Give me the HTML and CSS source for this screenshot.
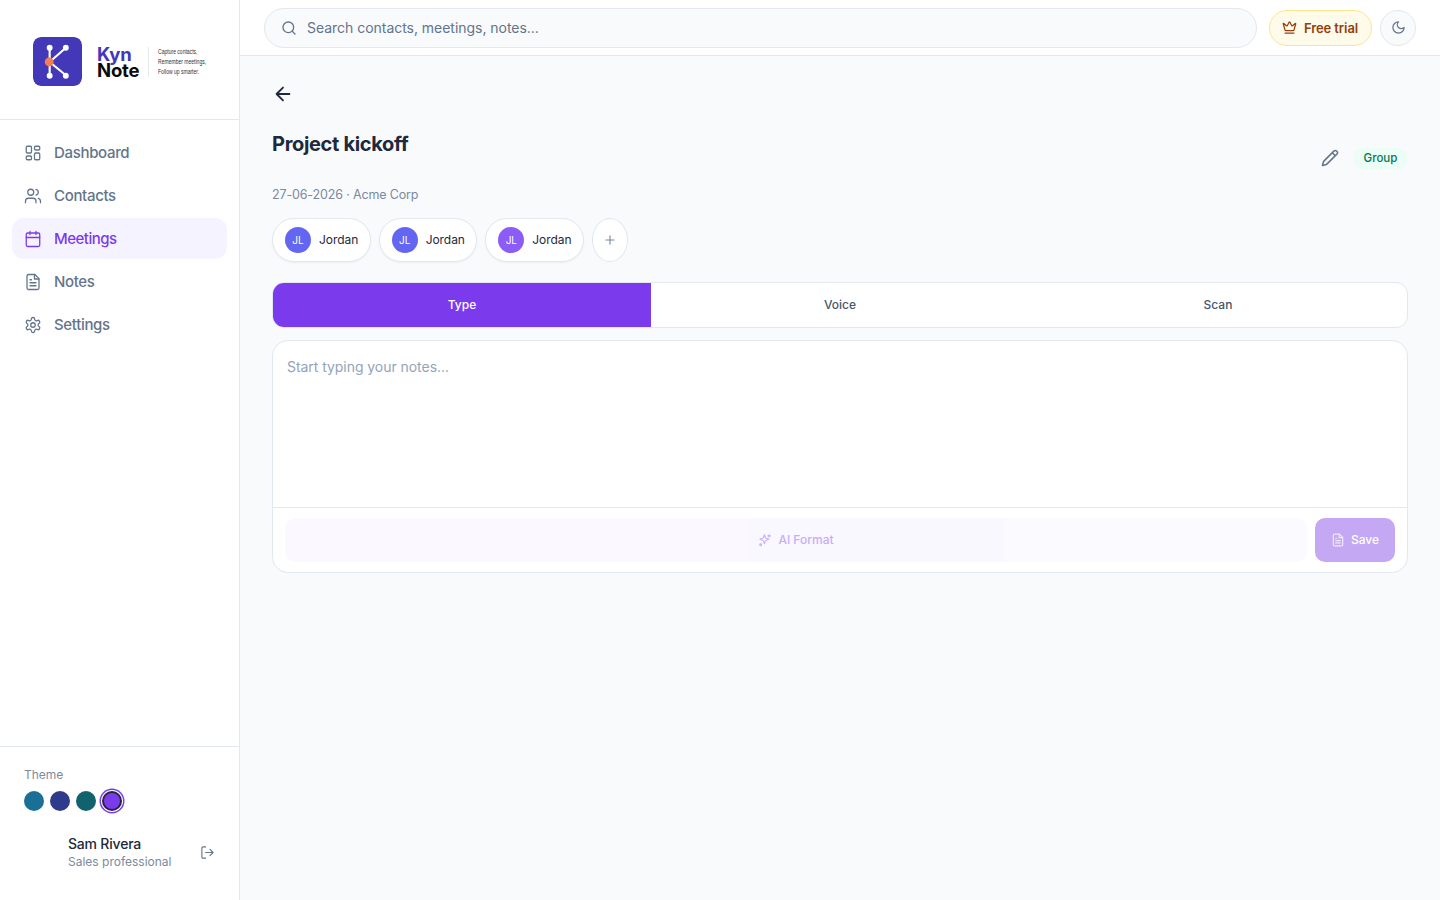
FILE: index.html
```html
<!DOCTYPE html>
<html lang="en">
<head>
<meta charset="utf-8">
<title>KynNote</title>
<link rel="stylesheet" href="styles.css">
</head>
<body>
<div class="app">
  <aside class="sidebar">
    <div class="brand">
      <svg class="logo" viewBox="0 0 50 50" width="49" height="49">
        <rect width="50" height="50" rx="8" fill="#4338b8"/>
        <g stroke="#fff" stroke-width="2.2" stroke-linecap="round">
          <path d="M17 11V40M17 25.500L33.500 11M17 25.500L33.500 39"/>
        </g>
        <circle cx="17" cy="11" r="3" fill="#fff"/><circle cx="33.500" cy="11" r="3" fill="#fff"/>
        <circle cx="17" cy="39.500" r="3" fill="#fff"/><circle cx="33.500" cy="39.500" r="3" fill="#fff"/>
        <circle cx="16.500" cy="25.500" r="4.500" fill="#f47c56"/>
      </svg>
      <div class="wordmark"><span class="kyn">Kyn</span><span class="note">Note</span></div>
      <div class="tagline"><span>Capture contacts,</span><span>Remember meetings,</span><span>Follow up smarter.</span></div>
    </div>
    <nav class="nav">
      <a class="nav-item"><svg class="ico" viewBox="0 0 24 24"><rect x="3" y="3" width="7" height="9" rx="1.500"/><rect x="14" y="3" width="7" height="5" rx="1.500"/><rect x="14" y="12" width="7" height="9" rx="1.500"/><rect x="3" y="16" width="7" height="5" rx="1.500"/></svg>Dashboard</a>
      <a class="nav-item"><svg class="ico" viewBox="0 0 24 24"><path d="M16 21v-2a4 4 0 0 0-4-4H6a4 4 0 0 0-4 4v2"/><circle cx="9" cy="7" r="4"/><path d="M22 21v-2a4 4 0 0 0-3-3.870M16 3.130a4 4 0 0 1 0 7.750"/></svg>Contacts</a>
      <a class="nav-item active"><svg class="ico" viewBox="0 0 24 24"><path d="M8 2v4M16 2v4"/><rect x="3" y="4" width="18" height="18" rx="2"/><path d="M3 10h18"/></svg>Meetings</a>
      <a class="nav-item"><svg class="ico" viewBox="0 0 24 24"><path d="M14.500 2H6a2 2 0 0 0-2 2v16a2 2 0 0 0 2 2h12a2 2 0 0 0 2-2V7.500z"/><path d="M14 2v6h6M16 13H8M16 17H8M10 9H8"/></svg>Notes</a>
      <a class="nav-item"><svg class="ico" viewBox="0 0 24 24"><path d="M12.220 2h-.440a2 2 0 0 0-2 2v.180a2 2 0 0 1-1 1.730l-.430.250a2 2 0 0 1-2 0l-.150-.080a2 2 0 0 0-2.730.730l-.220.380a2 2 0 0 0 .730 2.730l.150.100a2 2 0 0 1 1 1.720v.510a2 2 0 0 1-1 1.740l-.150.090a2 2 0 0 0-.730 2.730l.220.380a2 2 0 0 0 2.730.730l.150-.080a2 2 0 0 1 2 0l.430.250a2 2 0 0 1 1 1.730V20a2 2 0 0 0 2 2h.440a2 2 0 0 0 2-2v-.180a2 2 0 0 1 1-1.730l.430-.250a2 2 0 0 1 2 0l.150.080a2 2 0 0 0 2.730-.730l.220-.390a2 2 0 0 0-.730-2.730l-.150-.080a2 2 0 0 1-1-1.740v-.500a2 2 0 0 1 1-1.740l.150-.090a2 2 0 0 0 .730-2.730l-.220-.380a2 2 0 0 0-2.730-.730l-.150.080a2 2 0 0 1-2 0l-.430-.250a2 2 0 0 1-1-1.730V4a2 2 0 0 0-2-2z"/><circle cx="12" cy="12" r="3"/></svg>Settings</a>
    </nav>
    <div class="side-foot">
      <div class="theme-label">Theme</div>
      <div class="swatches">
        <span class="swatch s1"></span><span class="swatch s2"></span><span class="swatch s3"></span><span class="swatch s4"></span>
      </div>
      <div class="user">
        <div class="user-text"><div class="user-name">Sam Rivera</div><div class="user-role">Sales professional</div></div>
        <svg class="logout" viewBox="0 0 24 24"><path d="M9 21H5a2 2 0 0 1-2-2V5a2 2 0 0 1 2-2h4M16 17l5-5-5-5M21 12H9"/></svg>
      </div>
    </div>
  </aside>
  <div class="content">
    <header class="topbar">
      <div class="search">
        <svg class="search-ico" viewBox="0 0 24 24"><circle cx="11" cy="11" r="8"/><path d="m21 21-4.300-4.300"/></svg>
        <span>Search contacts, meetings, notes...</span>
      </div>
      <div class="trial">
        <svg class="crown" viewBox="0 0 24 24"><path d="M11.560 3.270a.5.500 0 0 1 .880 0l2.950 5.600a1 1 0 0 0 1.520.300l4.280-3.670a.5.500 0 0 1 .810.510l-2.830 10.240a1 1 0 0 1-.960.750H5.800a1 1 0 0 1-.960-.750L2 5.980a.5.500 0 0 1 .810-.510l4.280 3.670a1 1 0 0 0 1.520-.300z"/><path d="M5 21h14"/></svg>
        Free trial
      </div>
      <div class="theme-btn"><svg viewBox="0 0 24 24"><path d="M12 3a6 6 0 0 0 9 9 9 9 0 1 1-9-9z"/></svg></div>
    </header>
    <main class="main">
      <svg class="back" viewBox="0 0 24 24"><path d="m12 19-7-7 7-7M19 12H5"/></svg>
      <div class="title-row">
        <h1>Project kickoff</h1>
        <div class="title-side">
          <svg class="pencil" viewBox="0 0 24 24"><path d="M21.170 6.810a2.830 2.830 0 0 0-4-4L3.820 16.170a2 2 0 0 0-.500.830l-1.320 4.350a.5.500 0 0 0 .620.620l4.350-1.320a2 2 0 0 0 .830-.500zM15 5l4 4"/></svg>
          <span class="tag">Group</span>
        </div>
      </div>
      <div class="meta">27-06-2026 · Acme Corp</div>
      <div class="people">
        <div class="chip"><span class="avatar indigo">JL</span>Jordan</div>
        <div class="chip"><span class="avatar indigo">JL</span>Jordan</div>
        <div class="chip"><span class="avatar violet">JL</span>Jordan</div>
        <div class="add"><svg viewBox="0 0 24 24"><path d="M5 12h14M12 5v14"/></svg></div>
      </div>
      <div class="tabs">
        <div class="tab on">Type</div>
        <div class="tab">Voice</div>
        <div class="tab">Scan</div>
      </div>
      <section class="editor">
        <div class="editor-body">Start typing your notes...</div>
        <div class="editor-foot">
          <div class="ai-btn">
            <svg viewBox="0 0 24 24"><path d="M11 4.500 12.700 9.300a3 3 0 0 0 2 2L19.500 13l-4.800 1.700a3 3 0 0 0-2 2L11 21.500 9.300 16.700a3 3 0 0 0-2-2L2.500 13l4.800-1.700a3 3 0 0 0 2-2z" transform="translate(1 -1) scale(.9)"/><path d="M19 3v4M21 5h-4"/><circle cx="4.500" cy="20" r="1.500"/></svg>
            AI Format
          </div>
          <div class="save">
            <svg viewBox="0 0 24 24"><path d="M14.500 2H6a2 2 0 0 0-2 2v16a2 2 0 0 0 2 2h12a2 2 0 0 0 2-2V7.500z"/><path d="M14 2v6h6M16 13H8M16 17H8M10 9H8"/></svg>
            Save
          </div>
        </div>
      </section>
    </main>
  </div>
</div>
</body>
</html>
```
FILE: styles.css
```css
* { box-sizing: border-box; }
html, body { margin: 0; height: 100%; }
body {
  font-family: "Inter", "Noto Sans", sans-serif;
  color: #1e293b;
  background: #f8fafc;
}
svg { fill: none; stroke: currentColor; stroke-width: 2; stroke-linecap: round; stroke-linejoin: round; flex: none; display: block; }

.app { display: flex; width: 1440px; height: 900px; overflow: hidden; }

/* Sidebar */
.sidebar {
  width: 240px; flex: none; background: #fff;
  border-right: 1px solid #e2e8f0;
  display: flex; flex-direction: column;
}
.brand {
  height: 120px; flex: none; border-bottom: 1px solid #e2e8f0;
  display: flex; align-items: center; padding: 5px 0 0 33px;
}
.logo { stroke: none; border-radius: 8px; margin-right: 14px; margin-bottom: 2px; }
.logo g { stroke: #fff; }
.logo circle { stroke: none; }
.wordmark { display: flex; flex-direction: column; font-weight: 700; font-size: 18.500px; line-height: 15.500px; letter-spacing: -.2px; width: 51px; margin: 1px 0 0 1px; }
.kyn { color: #4338b8; }
.note { color: #0a0a0a; }
.tagline {
  display: flex; flex-direction: column; border-left: 1px solid #d9dde3;
  padding-left: 14px; font-family: "Liberation Sans", sans-serif;
  font-size: 7.500px; line-height: 10px; color: #333; white-space: nowrap;
  transform: scaleX(.67); transform-origin: left center;
}
.nav { padding: 12px 12px 0; display: flex; flex-direction: column; gap: 2px; flex: 1; }
.nav-item {
  height: 41px; display: flex; align-items: center; gap: 12px; padding: 0 12px;
  border-radius: 12px; font-size: 15px; font-weight: 500; color: #64748b; letter-spacing: -.33px;
}
.nav-item.active { background: #f5f3ff; color: #7c3aed; letter-spacing: -.5px; }
.ico { width: 18px; height: 18px; stroke-width: 1.700; }
.side-foot { height: 154px; flex: none; border-top: 1px solid #e2e8f0; padding: 21px 24px 0; }
.theme-label { font-size: 12px; line-height: 14px; color: #7b8aa0; }
.swatches { display: flex; gap: 6px; margin-top: 9px; align-items: center; height: 20px; }
.swatch { width: 20px; height: 20px; border-radius: 50%; flex: none; }
.s1 { background: #1a6f96; }
.s2 { background: #2e3a8c; }
.s3 { background: #12626e; }
.s4 { background: #7c3aed; box-shadow: 0 0 0 2px #1e293b, 0 0 0 3px #fff, 0 0 0 4.500px #7c3aed; width: 16px; height: 16px; margin: 0 2px; }
.user { display: flex; align-items: center; margin-top: 24px; padding-left: 44px; }
.user-text { flex: 1; white-space: nowrap; }
.user-name { font-size: 14px; line-height: 18px; font-weight: 500; color: #1e293b; letter-spacing: -.2px; }
.user-role { font-size: 12px; line-height: 17px; color: #7b8aa0; }
.logout { width: 15px; height: 15px; color: #64748b; stroke-width: 1.800; }

/* Top bar */
.content { flex: 1; display: flex; flex-direction: column; min-width: 0; }
.topbar {
  height: 56px; flex: none; background: #fff; border-bottom: 1px solid #e2e8f0;
  display: flex; align-items: center; gap: 12px; padding: 0 24px;
}
.search {
  flex: 1; height: 40px; border: 1px solid #e2e8f0; border-radius: 20px; background: #f8fafc;
  display: flex; align-items: center; gap: 10px; padding: 0 16px; font-size: 14px; color: #64748b; letter-spacing: -.03px;
}
.search-ico { width: 16px; height: 16px; }
.trial {
  height: 36px; width: 103px; flex: none; border: 1px solid #fde68a; background: #fffbeb; border-radius: 18px;
  display: flex; align-items: center; gap: 7px; justify-content: center;
  font-size: 13px; font-weight: 600; color: #92400e; letter-spacing: -.08px;
}
.crown { width: 15px; height: 15px; margin-left: -1px; }
.theme-btn {
  width: 36px; height: 36px; flex: none; margin-left: -4px; border: 1px solid #e2e8f0; border-radius: 50%; background: #f8fafc;
  display: flex; align-items: center; justify-content: center; color: #64748b;
}
.theme-btn svg { width: 15px; height: 15px; }

/* Main */
.main { flex: 1; padding: 27px 32px; background: #f8fafc; }
.back { width: 22px; height: 22px; color: #1e293b; }
.title-row { display: flex; justify-content: space-between; margin-top: 25px; height: 54px; }
h1 { margin: 0; font-size: 20px; line-height: 28px; font-weight: 700; color: #1e293b; letter-spacing: -.33px; }
.title-side { display: flex; align-items: center; gap: 14px; height: 26px; margin-top: 15px; }
.pencil { width: 18px; height: 18px; color: #64748b; }
.tag {
  height: 21px; width: 55px; justify-content: center; border-radius: 11px; background: #ecfdf5; color: #047857;
  display: flex; align-items: center; font-size: 11.500px; font-weight: 500;
}
.meta { font-size: 12.500px; line-height: 16px; color: #7b8aa0; margin-top: 3px; letter-spacing: -.15px; }
.people { display: flex; gap: 8px; margin-top: 15px; }
.chip {
  height: 44px; border: 1px solid #e2e8f0; border-radius: 22px; background: #fff; padding: 0 12px 1px;
  display: flex; align-items: center; gap: 8px; font-size: 12px; color: #1e293b; width: 98.670px;
  letter-spacing: -.05px; box-shadow: 0 1px 2px rgba(15,23,42,.05);
}
.avatar {
  width: 26px; height: 26px; flex: none; border-radius: 50%; color: #fff; font-size: 10px;
  display: flex; align-items: center; justify-content: center; margin-top: 1px;
}
.indigo { background: #6366f1; }
.violet { background: #8b5cf6; }
.add {
  width: 36px; height: 44px; border: 1px solid #e2e8f0; border-radius: 18px / 22px; background: #fff;
  display: flex; align-items: center; justify-content: center; color: #7b8aa0;
}
.add svg { width: 14px; height: 14px; }
.tabs {
  display: flex; margin-top: 20px; height: 46px; border: 1px solid #e2e8f0; border-radius: 12px; background: #fff; overflow: hidden;
}
.tab { flex: 1; display: flex; align-items: center; justify-content: center; padding-bottom: 1px; font-size: 12px; font-weight: 500; color: #475569; }
.tab.on { background: #7c3aed; color: #fff; }
.editor { margin-top: 12px; height: 233px; border: 1px solid #e2e8f0; border-radius: 16px; background: #fff; display: flex; flex-direction: column; }
.editor-body { height: 166px; flex: none; padding: 16px 14px; font-size: 14px; line-height: 20px; color: #94a3b8; letter-spacing: -.05px; }
.editor-foot { flex: 1; border-top: 1px solid #e2e8f0; display: flex; gap: 8px; padding: 10px 12px; }
.ai-btn {
  flex: 1; height: 44px; border-radius: 10px; color: #c9aef6; padding-bottom: 1px;
  background: linear-gradient(90deg, #fbf9ff 45.500%, #f9f7ff 45.500%, #f9f7ff 70.400%, #fbfaff 70.400%);
  display: flex; align-items: center; justify-content: center; gap: 6px; font-size: 12px; font-weight: 500;
}
.ai-btn svg { width: 14px; height: 14px; margin-top: 1px; }
.save {
  width: 80px; height: 44px; border-radius: 10px; background: #c4a8f4; color: #fff; padding-bottom: 1px;
  display: flex; align-items: center; justify-content: center; gap: 6px; font-size: 12px; font-weight: 500;
}
.save svg { width: 14px; height: 14px; opacity: .75; margin-top: 1px; }
```
